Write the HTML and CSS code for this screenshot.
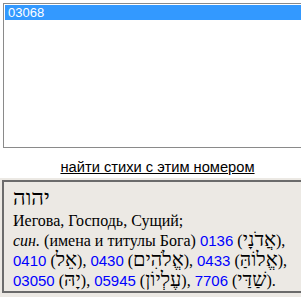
FILE: index.html
```html
<!DOCTYPE html>
<html lang="ru">
<head>
    <meta charset="UTF-8">
    <title>Стронг</title>
    <link rel="stylesheet" href="styles.css">
</head>
<body>
    <div class="listbox">
        <div class="option selected">03068</div>
    </div>

    <div class="find">
        <a href="#">найти стихи с этим номером</a>
    </div>

    <div class="details-wrap">
        <div class="details">
            <div class="word"><bdi class="heb-word">יהוה</bdi></div>
            <div class="line">Иегова, Господь, Сущий;</div>
            <div class="line"><i>син.</i> (имена и титулы Бога) <a class="num" href="#">0136</a> (<bdi class="heb">אֲדֹנָי</bdi>),</div>
            <div class="line"><a class="num" href="#">0410</a> (<bdi class="heb">אֵל</bdi>), <a class="num" href="#">0430</a> (<bdi class="heb">אֱלֹהִים</bdi>), <a class="num" href="#">0433</a> (<bdi class="heb">אֱלוֹהַּ</bdi>),</div>
            <div class="line"><a class="num" href="#">03050</a> (<bdi class="heb">יָהּ</bdi>), <a class="num" href="#">05945</a> (<bdi class="heb">עֶלְיוֹן</bdi>), <a class="num" href="#">7706</a> (<bdi class="heb">שַׁדַּי</bdi>).</div>
        </div>
    </div>
</body>
</html>
```

FILE: styles.css
```css
html,
body {
    margin: 0;
    padding: 0;
    overflow: hidden;
    background-color: #fff;
}

body {
    font-family: "Liberation Sans", Arial, sans-serif;
    width: 301px;
    height: 297px;
}

.listbox {
    margin: 3px 0 0 3px;
    width: 320px;
    height: 141px;
    border: 1px solid #8a8a8a;
    padding: 1px;
}

.listbox .option {
    height: 15px;
    line-height: 15px;
    font-size: 13px;
    padding-left: 3px;
    color: #000;
}

.listbox .selected {
    background-color: #3399ff;
    color: #fff;
}

.find {
    text-align: center;
    padding: 10px 0 0 14px;
    height: 20px;
}

.find a {
    color: #000;
    font-size: 14.7px;
}

.details-wrap {
    background-color: #ece9e4;
    padding: 2px 0 0 2px;
    height: 200px;
}

.details {
    width: 320px;
    border: 2px solid #6b6b6b;
    border-right: none;
    padding: 3px 0 0 9px;
    font-family: "Liberation Serif", "Times New Roman", serif;
    font-size: 16px;
    color: #000;
}

.word {
    font-size: 22px;
    line-height: 26px;
}

.line {
    line-height: 20px;
    white-space: nowrap;
}

.num {
    font-family: "Liberation Sans", Arial, sans-serif;
    font-size: 15px;
    color: #0000ff;
    text-decoration: none;
}

.heb {
    font-size: 20px;
    line-height: 16px;
}
```
